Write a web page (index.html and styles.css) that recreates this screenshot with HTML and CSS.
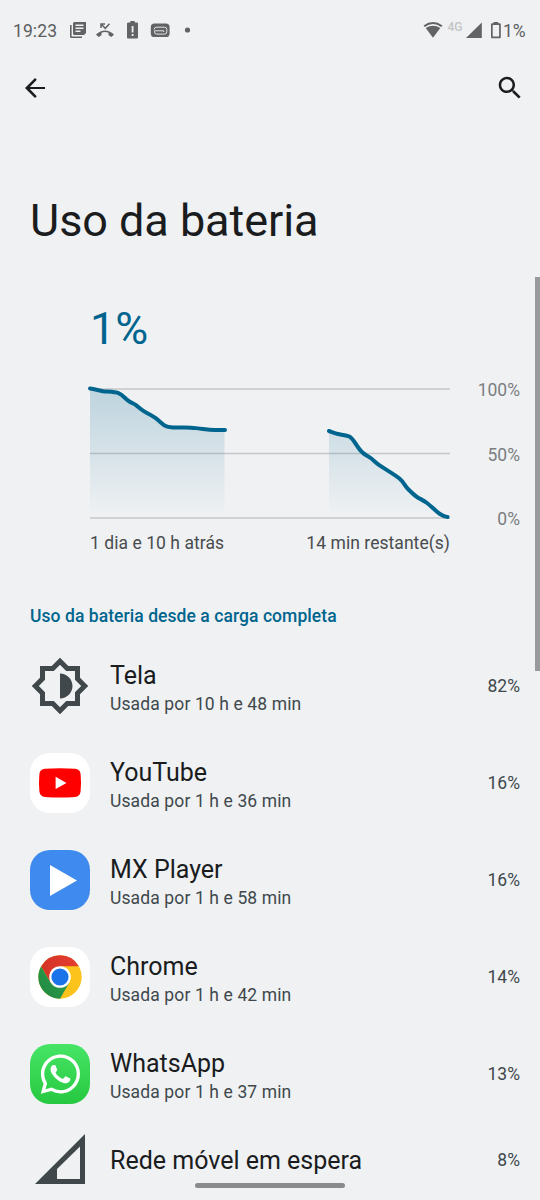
FILE: index.html
```html
<!DOCTYPE html>
<html lang="pt-BR">
<head>
<meta charset="utf-8">
<title>Uso da bateria</title>
<link rel="stylesheet" href="styles.css">
</head>
<body>
<div class="screen">
  <header class="status">
    <span class="clock">19:23</span>
    <svg class="notifications" width="126" height="20" viewBox="66 20 126 20" fill="#626365">
      <path d="M70 25h1.600v11.500H82v1.500H71.500a1.500 1.500 0 0 1-1.500-1.500z"/>
      <path fill-rule="evenodd" d="M74.500 22H86v11l-2 2H74.500a1.500 1.500 0 0 1-1.500-1.500v-10a1.500 1.500 0 0 1 1.500-1.500zM75.500 24.600v1.400h8v-1.400zm0 3v1.400h8v-1.400zm0 3v1.400h5v-1.400z"/>
      <path d="M96 34.500Q105 26.500 114 34.500L111.500 37Q109.300 35.800 108.500 35V32.700Q105 31.400 101.500 32.700V35Q100.700 35.800 98.500 37z"/>
      <path fill="none" stroke="#626365" stroke-width="1.500" d="M101 28v-4h4M101.500 24.500l3.800 3.800 4.200-4.500"/>
      <path fill-rule="evenodd" d="M128.500 22.500h1.800V21h4.400v1.500h2.300q1 0 1 1v14q0 1-1 1h-9q-1 0-1-1v-14q0-1 1.500-1zM131.700 26v6.500h1.800V26zm0 8v2h1.800v-2z"/>
      <rect x="150.800" y="23.500" width="18.800" height="13.500" rx="3.600"/>
      <path fill="none" stroke="#e3e4e6" stroke-width="1" d="M154.500 30.800h9.200v1.200M154.200 29.500q0-2.300 2.300-2.300h8q2.300 0 2.300 2.300v2.300q0 2.300-2.300 2.300h-7.700q-2.300 0-2.300-2.300v-1"/>
      <circle cx="187.500" cy="30" r="2.600"/>
    </svg>
    <svg class="signals" width="80" height="20" viewBox="423 20 80 20" fill="#626365">
      <path d="M424.500 25.400Q434 18.600 443.500 25.400L442.200 27Q434 21.200 425.800 27z"/>
      <path d="M426.700 28Q434 23.400 441.300 28L434 37.700z"/>
      <text class="network" x="448.500" y="31">4G</text>
      <path d="M482.800 22.500V38H467z"/>
      <path fill-rule="evenodd" d="M494.500 22h4.800v1.300h1.500q1 0 1 1v13q0 1-1 1h-7.800q-1 0-1-1v-13q0-1 1-1h1.500zM493.700 25v11.500h6.400V25z"/>
    </svg>
    <span class="charge">1%</span>
  </header>

  <nav class="toolbar">
    <svg width="30" height="30" viewBox="0 0 24 24"><path fill="#1a1c1e" d="M20 11.200H7.830l5.590-5.790L12 4l-8 8 8 8 1.410-1.410L7.830 12.800H20z"/></svg>
    <svg width="30" height="30" viewBox="0 0 24 24"><path fill="#1a1c1e" d="M15.500 14h-.79l-.28-.27C15.410 12.590 16 11.110 16 9.500 16 5.910 13.090 3 9.500 3S3 5.910 3 9.500 5.910 16 9.500 16c1.610 0 3.090-.59 4.230-1.570l.27.28v.79l5 4.990L20.490 19l-4.990-5zm-6 0C7.010 14 5 11.990 5 9.500S7.010 5 9.500 5 14 7.010 14 9.500 11.990 14 9.500 14z"/></svg>
  </nav>

  <h1 class="title">Uso da bateria</h1>

  <section class="usage">
    <div class="level">1%</div>
    <div class="chart">
      <svg width="380" height="140" viewBox="80 382 380 140">
        <defs>
          <linearGradient id="fade" gradientUnits="userSpaceOnUse" x1="0" y1="388" x2="0" y2="516">
            <stop offset="0" stop-color="#00658e" stop-opacity=".21"/>
            <stop offset="1" stop-color="#00658e" stop-opacity="0"/>
          </linearGradient>
        </defs>
        <path stroke="#c5c7c9" stroke-width="1.400" d="M90 389h360M90 453.500h360M90 518h360"/>
        <path fill="url(#fade)" d="M90 388.500L103 391L117 392.700L122 395L128 401L135 405L144 412L154 418L164 425.500L170 427L185 427.500L200 428.500L210 429.800H224.500V516H90z"/>
        <path fill="url(#fade)" d="M329 431L338 434L348 436L352 439L358 448L363 453L371 458L380 466L400 479L408 489L417 497L427 503L440 514L447 517H329z"/>
        <g fill="none" stroke="#00658e" stroke-width="4" stroke-linecap="round" stroke-linejoin="round">
          <path d="M90 388.500C95 389 99 390.700 103 391.200S115 391.700 119 393.300C123 395 125 398.700 129 401.200S133 403 136 405.200S142 410.500 146 412.500S151 415 155 417.700S162 424 165 425.700S170 427.200 175 427.500S186 427.200 191 427.700S199 428.300 203 428.900S211 430 215 430H225"/>
          <path d="M329 431C332 432 335 433.300 338 434S345 435 349 436.300C354 438.300 356.500 447.500 362.500 452.500C365 455 368 455.800 371 458.200S376 463 380 465.700S396 475.500 400 479S405 486 408 489S414 495 417 497S423 500 427 503S436 511.500 440 514S445 516.500 447.500 517"/>
        </g>
      </svg>
      <div class="scale"><span>100%</span><span>50%</span><span>0%</span></div>
    </div>
    <div class="range"><span>1 dia e 10 h atrás</span><span>14 min restante(s)</span></div>
  </section>

  <h2 class="subtitle">Uso da bateria desde a carga completa</h2>

  <main class="apps">
    <div class="app">
      <svg class="icon" viewBox="0 0 24 24"><path fill="#40484c" fill-rule="evenodd" d="M20 8.690V4h-4.690L12 .69 8.690 4H4v4.690L.69 12 4 15.310V20h4.690L12 23.310 15.310 20H20v-4.690L23.310 12zm-2 5.790V18h-3.520L12 20.480 9.520 18H6v-3.520L3.520 12 6 9.520V6h3.520L12 3.520 14.480 6H18v3.520L20.480 12zM12 7v10c2.760 0 5-2.240 5-5s-2.240-5-5-5z"/></svg>
      <div class="info"><div class="name">Tela</div><div class="time">Usada por 10 h e 48 min</div></div>
      <span class="percent">82%</span>
    </div>
    <div class="app">
      <svg class="icon tile white" viewBox="0 0 60 60">
        <path fill="#f00" d="M15 15.800Q30 14.700 45 15.800Q50 16 50.600 21Q51.500 30 50.600 38.500Q50 43.500 45 43.900Q30 45 15 43.900Q10 43.500 9.400 38.500Q8.500 30 9.400 21Q10 16 15 15.800z"/>
        <path fill="#fff" d="M25.600 23.800v12.200L36.500 30z"/>
      </svg>
      <div class="info"><div class="name">YouTube</div><div class="time">Usada por 1 h e 36 min</div></div>
      <span class="percent">16%</span>
    </div>
    <div class="app">
      <svg class="icon tile blue" viewBox="0 0 60 60"><path fill="#fff" d="M20 15v31l27-15.500z"/></svg>
      <div class="info"><div class="name">MX Player</div><div class="time">Usada por 1 h e 58 min</div></div>
      <span class="percent">16%</span>
    </div>
    <div class="app">
      <svg class="icon tile white" viewBox="0 0 60 60">
        <defs>
          <linearGradient id="red" x1="0" x2="1"><stop stop-color="#d33426"/><stop offset="1" stop-color="#e53d31"/></linearGradient>
          <linearGradient id="green" x1="0" y1="1" x2="1" y2="0"><stop stop-color="#1f8740"/><stop offset="1" stop-color="#2fa150"/></linearGradient>
        </defs>
        <circle cx="30" cy="30" r="21.700" fill="#fbc31b"/>
        <path fill="url(#green)" d="M11.200 19.200A21.700 21.700 0 0 0 30 51.700L39.400 35.400L20.600 35.400z"/>
        <path fill="url(#red)" d="M11.200 19.200A21.700 21.700 0 0 1 48.800 19.200H30V30L20.600 35.400z"/>
        <circle cx="30" cy="30" r="10.800" fill="#fff"/>
        <circle cx="30" cy="30" r="8.600" fill="#1a73e8"/>
      </svg>
      <div class="info"><div class="name">Chrome</div><div class="time">Usada por 1 h e 42 min</div></div>
      <span class="percent">14%</span>
    </div>
    <div class="app">
      <svg class="icon tile whatsapp" viewBox="0 0 60 60"><path fill="#fff" transform="translate(10.700 10.400) scale(1.640)" d="M17.472 14.382c-.297-.149-1.758-.867-2.030-.967-.273-.099-.471-.148-.67.15-.197.297-.767.966-.94 1.164-.173.199-.347.223-.644.075-.297-.15-1.255-.463-2.390-1.475-.883-.788-1.480-1.761-1.653-2.059-.173-.297-.018-.458.13-.606.134-.133.298-.347.446-.52.149-.174.198-.298.298-.497.099-.198.05-.371-.025-.52-.075-.149-.669-1.612-.916-2.207-.242-.579-.487-.5-.669-.51-.173-.008-.371-.01-.57-.01-.198 0-.52.074-.792.372-.272.297-1.040 1.016-1.040 2.479 0 1.462 1.065 2.875 1.213 3.074.149.198 2.096 3.200 5.077 4.487.709.306 1.262.489 1.694.625.712.227 1.360.195 1.871.118.571-.085 1.758-.719 2.006-1.413.248-.694.248-1.289.173-1.414-.074-.124-.272-.198-.57-.347m-5.421 7.403h-.004a9.870 9.870 0 0 1-5.031-1.378l-.361-.214-3.741.982.998-3.648-.235-.374a9.860 9.860 0 0 1-1.510-5.260c.001-5.450 4.436-9.884 9.888-9.884 2.640 0 5.122 1.030 6.988 2.898a9.825 9.825 0 0 1 2.893 6.994c-.003 5.450-4.437 9.884-9.885 9.884m8.413-18.297A11.815 11.815 0 0 0 12.050 0C5.495 0 .16 5.335.157 11.892c0 2.096.547 4.142 1.588 5.945L.057 24l6.305-1.654a11.882 11.882 0 0 0 5.683 1.448h.005c6.554 0 11.890-5.335 11.893-11.893a11.821 11.821 0 0 0-3.480-8.413z"/></svg>
      <div class="info"><div class="name">WhatsApp</div><div class="time">Usada por 1 h e 37 min</div></div>
      <span class="percent">13%</span>
    </div>
    <div class="app last">
      <svg class="icon" viewBox="0 0 60 60"><path fill="#40484c" fill-rule="evenodd" d="M55 4v50H5zM50 16.500L27 39v10h23z"/></svg>
      <div class="info"><div class="name">Rede móvel em espera</div></div>
      <span class="percent">8%</span>
    </div>
  </main>
  <div class="scrollbar"></div>
  <div class="home-bar"></div>
</div>
</body>
</html>
```
FILE: styles.css
```css
* { box-sizing: border-box; }
body { margin: 0; }
.screen {
  position: relative;
  width: 540px;
  height: 1200px;
  overflow: hidden;
  background: #eff1f3;
  color: #1a1c1e;
  font-family: Roboto, sans-serif;
}
.status {
  display: flex;
  align-items: center;
  height: 60px;
  padding: 0 13px;
  color: #5c5d5f;
  font-size: 17.500px;
  font-weight: 450;
}
.clock { width: 53px; line-height: 20px; margin-top: 2px; letter-spacing: .1px; }
.signals { margin-left: auto; }
.network { fill: #c4c5c7; font-size: 12px; font-weight: 500; }
.charge { width: 24px; margin: 2px 0 0 1px; line-height: 20px; letter-spacing: -.2px; white-space: nowrap; }
.toolbar {
  display: flex;
  justify-content: space-between;
  align-items: center;
  height: 55px;
  padding: 0 15px 0 20px;
}
.title {
  margin: 78px 0 0 30px;
  font-size: 45px;
  font-weight: 400;
  line-height: 56px;
  letter-spacing: -.05px;
}
.usage { height: 311px; padding-top: 52px; }
.level { padding-left: 90px; color: #00658e; font-size: 45px; line-height: 56px; }
.chart { display: flex; height: 140px; margin-top: 25px; padding: 0 20px 0 80px; }
.scale {
  display: flex;
  flex: 1;
  flex-direction: column;
  justify-content: space-between;
  height: 149px;
  margin-left: -10px;
  margin-top: -2px;
  color: #7b7e81;
  font-size: 17.500px;
  line-height: 20px;
  text-align: right;
}
.range {
  display: flex;
  justify-content: space-between;
  width: 360px;
  margin: 11px 0 0 90px;
  color: #484b4e;
  font-size: 17.500px;
  line-height: 20px;
  letter-spacing: .05px;
}
.subtitle {
  margin: 46px 0 0 30px;
  color: #00658e;
  font-size: 17.500px;
  font-weight: 500;
  line-height: 20px;
  letter-spacing: .06px;
}
.apps { padding-top: 11px; }
.app { display: flex; align-items: center; height: 97px; padding: 0 20px 0 30px; }
.icon { flex: none; width: 60px; height: 60px; margin-right: 20px; }
.tile { border-radius: 20px; }
.white { background: #fff; }
.blue { background: #3e8aee; }
.whatsapp { background: linear-gradient(#46e566, #27c840); }
.info { flex: 1; padding-top: 3px; }
.name { font-size: 25px; line-height: 30px; }
.time {
  margin-top: 3px;
  color: #40484c;
  font-size: 17.500px;
  line-height: 20px;
  letter-spacing: .12px;
}
.percent { color: #40484c; font-size: 17.500px; }
.last { height: 76px; }
.last .info { padding-top: 1px; }
.scrollbar {
  position: absolute;
  top: 277px;
  right: 0;
  width: 5px;
  height: 394px;
  background: #97999c;
}
.home-bar {
  position: absolute;
  bottom: 12px;
  left: 195px;
  width: 150px;
  height: 5px;
  border-radius: 3px;
  background: #8a8b8d;
}
```
